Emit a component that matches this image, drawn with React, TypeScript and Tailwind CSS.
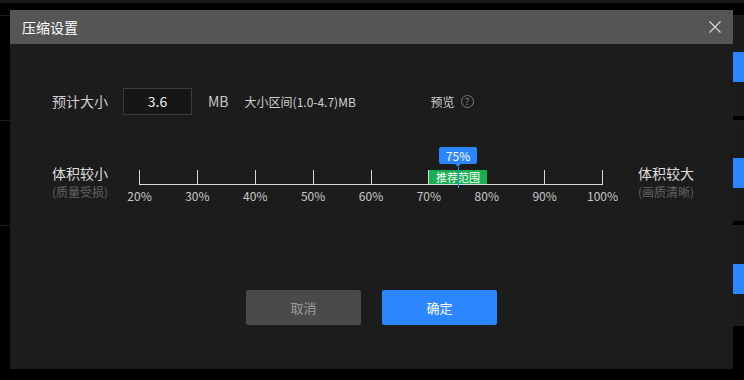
import React from "react";

const ticks = ["20%", "30%", "40%", "50%", "60%", "70%", "80%", "90%", "100%"];

function BackgroundRow({ blueTop }: { blueTop: string }) {
  return (
    <div className="h-[101px] flex bg-black border-t border-[#1e1e1e]">
      <div className="flex-1" />
      <div className={`w-[300px] bg-[#1b1b1b] flex justify-end ${blueTop}`}>
        <div className="w-[60px] h-[30px] bg-[#2b86ff]" />
      </div>
    </div>
  );
}

function SideLabel({ main, sub }: { main: string; sub: string }) {
  return (
    <div className="flex flex-col">
      <span className="text-[14px] leading-[17px] text-[#dedede]">{main}</span>
      <span className="mt-[2px] text-[12px] leading-[15px] text-[#626262]">{sub}</span>
    </div>
  );
}

export default function App() {
  return (
    <div
      className="relative w-[744px] h-[380px] overflow-hidden bg-black"
      style={{ fontFamily: '"Noto Sans CJK SC", "Noto Sans", sans-serif' }}
    >
      {/* page behind the dialog */}
      <div className="flex flex-col gap-[4px]">
        <div className="h-[3px] bg-[#1a1a1a]" />
        <div className="h-[4px]" />
        <BackgroundRow blueTop="pt-[36px]" />
        <BackgroundRow blueTop="pt-[37px]" />
        <BackgroundRow blueTop="pt-[38px]" />
      </div>

      {/* dialog */}
      <div className="absolute left-[10px] top-[10px] w-[723px] h-[359px] bg-[#1c1c1c] flex flex-col">
        <div className="h-[34px] bg-[#555555] flex items-center justify-between pl-[12px] pr-[12px]">
          <span className="text-[14px] text-white leading-none">压缩设置</span>
          <svg width="14" height="14" viewBox="0 0 14 14" className="mr-[-1px]">
            <path d="M1.5 1.5 L12.5 12.5 M12.5 1.5 L1.5 12.5" stroke="#dcdcdc" strokeWidth="1.1" fill="none" />
          </svg>
        </div>

        <div className="flex-1 flex flex-col pl-[42px]">
          {/* size row */}
          <div className="mt-[44px] h-[27px] flex items-center">
            <span className="w-[71px] text-[14px] text-[#cfcfcf]">预计大小</span>
            <div className="w-[69px] h-[27px] border border-[#3c3c3c] bg-[#161616] flex items-center justify-center text-[14px] text-[#f0f0f0]">
              3.6
            </div>
            <span className="ml-[16px] text-[14px] text-[#c8c8c8]">MB</span>
            <span className="ml-[16px] w-[186px] text-[12px] text-[#d0d0d0]">大小区间(1.0-4.7)MB</span>
            <span className="text-[12px] text-[#d0d0d0]">预览</span>
            <span className="ml-[6px] w-[13px] h-[13px] rounded-full border border-[#7a7a7a] flex items-center justify-center text-[9px] leading-none text-[#8a8a8a]">
              ?
            </span>
          </div>

          {/* slider row */}
          <div className="mt-[50px] flex">
            <div className="w-[87px]">
              <SideLabel main="体积较小" sub="(质量受损)" />
            </div>

            <div className="relative w-[464px]">
              <div className="mt-[5px] h-[14px] flex justify-between">
                {ticks.map((t) => (
                  <div key={t} className="w-px h-full bg-[#d8d8d8]" />
                ))}
              </div>
              <div className="h-px bg-[#d8d8d8]" />
              <div className="mt-[3px] flex justify-between">
                {ticks.map((t) => (
                  <div key={t} className="w-px flex justify-center">
                    <span className="whitespace-nowrap text-[12px] leading-[16px] text-[#c8c8c8]">{t}</span>
                  </div>
                ))}
              </div>

              {/* recommended range */}
              <div className="absolute left-[62.5%] top-[5px] w-[12.5%] h-[14px] bg-[#1aae52] flex items-center justify-center text-[11px] leading-none text-white">
                推荐范围
              </div>

              {/* current value marker */}
              <div className="absolute left-[68.75%] top-[-18px] flex flex-col items-center -translate-x-1/2">
                <div className="w-[38px] h-[17px] rounded-[2px] bg-[#2b86ff] flex items-center justify-center text-[12px] leading-none text-white">
                  75%
                </div>
                <div className="w-0 h-0 border-l-[3px] border-r-[3px] border-t-[3px] border-l-transparent border-r-transparent border-t-[#2b86ff]" />
                <div className="w-px h-[21px] bg-[#2b86ff]" />
              </div>
            </div>

            <div className="ml-[35px]">
              <SideLabel main="体积较大" sub="(画质清晰)" />
            </div>
          </div>
        </div>

        {/* buttons */}
        <div className="pb-[44px] flex justify-center gap-[21px]">
          <button className="w-[115px] h-[35px] rounded-[2px] bg-[#4a4a4a] text-[13px] text-[#9a9a9a]">取消</button>
          <button className="w-[115px] h-[35px] rounded-[2px] bg-[#2b86ff] text-[13px] text-white">确定</button>
        </div>
      </div>
    </div>
  );
}
